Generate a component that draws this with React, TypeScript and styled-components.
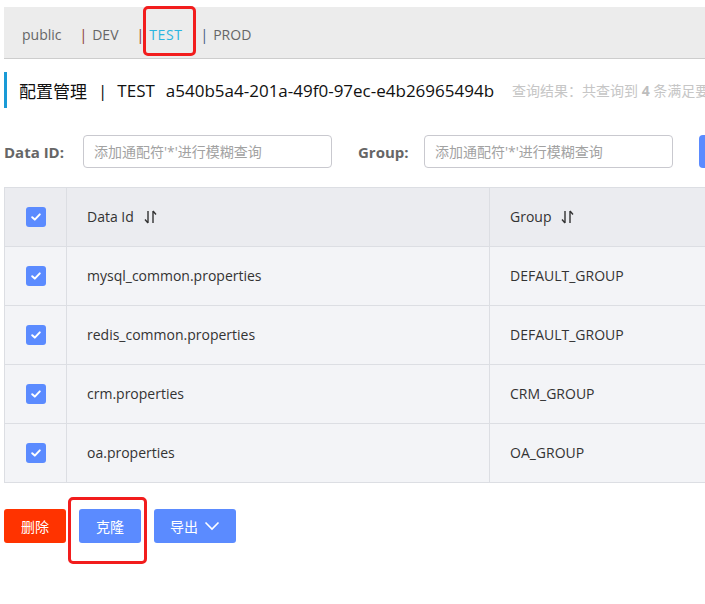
import React from "react";
import styled, { createGlobalStyle } from "styled-components";

const Global = createGlobalStyle`
  html, body { margin: 0; padding: 0; background: #fff; overflow: hidden; }
  body { font-family: "Open Sans", "Noto Sans CJK SC", sans-serif; color: #333; }
  * { box-sizing: border-box; }
`;

const Page = styled.div`
  position: relative;
  width: 705px;
  height: 604px;
  overflow: hidden;
  padding: 7px 0 0 4px;
`;

const TopBar = styled.div`
  height: 52px;
  width: 900px;
  background: #ececec;
  border-bottom: 1px solid #cdcdcd;
  display: flex;
  align-items: center;
  padding-left: 18px;
  padding-top: 3px;
  gap: 18px;
  font-size: 14px;
`;

const Tab = styled.span<{ $active?: boolean }>`
  color: ${(p) => (p.$active ? "#2bb5e0" : "#666")};
  white-space: nowrap;
  letter-spacing: ${(p) => (p.$active ? "0.6px" : "0")};
`;

const Sep = styled.span<{ $color: string }>`
  color: ${(p) => p.$color};
  margin-right: 5px;
  letter-spacing: 0;
`;

const TitleRow = styled.div`
  margin-top: 13px;
  height: 36px;
  display: flex;
  align-items: center;
  border-left: 3px solid #1a9ad6;
  padding-left: 12px;
  white-space: nowrap;
`;

const Title = styled.span`
  font-size: 17px;
  color: #111;
  display: inline-flex;
  align-items: center;
`;

const TitlePart = styled.span<{ $ml?: number }>`
  margin-left: ${(p) => p.$ml ?? 0}px;
`;

const Result = styled.span`
  margin-left: 18px;
  font-size: 14px;
  color: #c6c6c6;
  b { color: #bdbdbd; }
`;

const SearchRow = styled.div`
  margin-top: 27px;
  display: flex;
  align-items: center;
  height: 33px;
  white-space: nowrap;
`;

const Label = styled.span<{ $ml?: number; $w: number }>`
  font-weight: 700;
  font-size: 15px;
  color: #666;
  width: ${(p) => p.$w}px;
  flex-shrink: 0;
  margin-left: ${(p) => p.$ml ?? 0}px;
`;

const Input = styled.input`
  width: 249px;
  flex-shrink: 0;
  height: 33px;
  border: 1px solid #c9c9cf;
  border-radius: 4px;
  padding: 0 10px;
  font-size: 14px;
  font-family: inherit;
  outline: none;
  &::placeholder { color: #a2a2a2; }
`;

const SearchButton = styled.button`
  margin-left: 26px;
  height: 33px;
  width: 70px;
  flex-shrink: 0;
  border: none;
  border-radius: 4px;
  background: #5b8bff;
  color: #fff;
  font-size: 14px;
  font-family: inherit;
`;

const Table = styled.div`
  margin-top: 19px;
  width: 900px;
  border-top: 1px solid #dcdee3;
  border-left: 1px solid #dcdee3;
`;

const Row = styled.div<{ $head?: boolean }>`
  display: grid;
  grid-template-columns: 62px 423px 1fr;
  height: 59px;
  background: ${(p) => (p.$head ? "#ebecf0" : "#f3f4f7")};
  border-bottom: 1px solid #dcdee3;
`;

const Cell = styled.div<{ $center?: boolean }>`
  display: flex;
  align-items: center;
  justify-content: ${(p) => (p.$center ? "center" : "flex-start")};
  padding-left: ${(p) => (p.$center ? 0 : 20)}px;
  padding-bottom: 1px;
  border-right: 1px solid #dcdee3;
  font-size: 14px;
  color: #333;
  white-space: nowrap;
`;

const Check = styled.span`
  width: 20px;
  height: 20px;
  border-radius: 3px;
  background: #5b8bff;
  display: inline-flex;
  align-items: center;
  justify-content: center;
`;

const SortIcon = styled.svg`
  margin-left: 10px;
`;

const Actions = styled.div`
  margin-top: 26px;
  display: flex;
  gap: 13px;
`;

const Btn = styled.button<{ $danger?: boolean; $w: number }>`
  width: ${(p) => p.$w}px;
  height: 34px;
  border: none;
  border-radius: 3px;
  background: ${(p) => (p.$danger ? "#ff3300" : "#5b8bff")};
  color: #fff;
  font-size: 14px;
  font-family: inherit;
  display: inline-flex;
  align-items: center;
  justify-content: center;
  gap: 6px;
  padding: 0;
`;

const Highlight = styled.div`
  position: absolute;
  border: 3px solid #f21d1d;
  border-radius: 5px;
  pointer-events: none;
`;

const CheckMark = () => (
  <svg width="12" height="10" viewBox="0 0 12 10">
    <path d="M2.2 5.2 L4.8 7.6 L9.8 2.4" stroke="#fff" strokeWidth="2" fill="none" strokeLinecap="round" strokeLinejoin="round" />
  </svg>
);

const Sort = () => (
  <SortIcon width="13" height="14" viewBox="0 0 13 14">
    <path d="M4 1 V13 M4 13 L1 9.5" stroke="#333" strokeWidth="1.4" fill="none" />
    <path d="M9 13 V1 M9 1 L12 4.5" stroke="#333" strokeWidth="1.4" fill="none" />
  </SortIcon>
);

const rows = [
  ["mysql_common.properties", "DEFAULT_GROUP"],
  ["redis_common.properties", "DEFAULT_GROUP"],
  ["crm.properties", "CRM_GROUP"],
  ["oa.properties", "OA_GROUP"],
];

export default function App() {
  return (
    <>
      <Global />
      <Page>
        <TopBar>
          <Tab>public</Tab>
          <Tab><Sep $color="#8a3b1f">|</Sep>DEV</Tab>
          <Tab $active><Sep $color="#8a3b1f">|</Sep>TEST</Tab>
          <Tab><Sep $color="#3d5a80">|</Sep>PROD</Tab>
        </TopBar>
        <TitleRow>
          <Title>
            <span>配置管理</span>
            <TitlePart $ml={11}>|</TitlePart>
            <TitlePart $ml={10}>TEST</TitlePart>
            <TitlePart $ml={11}>a540b5a4-201a-49f0-97ec-e4b26965494b</TitlePart>
          </Title>
          <Result>查询结果：共查询到 <b>4</b> 条满足要求的配置。</Result>
        </TitleRow>
        <SearchRow>
          <Label $w={79}>Data ID:</Label>
          <Input placeholder="添加通配符'*'进行模糊查询" />
          <Label $ml={26} $w={66}>Group:</Label>
          <Input placeholder="添加通配符'*'进行模糊查询" />
          <SearchButton>查询</SearchButton>
        </SearchRow>
        <Table>
          <Row $head>
            <Cell $center><Check><CheckMark /></Check></Cell>
            <Cell>Data Id<Sort /></Cell>
            <Cell>Group<Sort /></Cell>
          </Row>
          {rows.map(([id, group]) => (
            <Row key={id}>
              <Cell $center><Check><CheckMark /></Check></Cell>
              <Cell>{id}</Cell>
              <Cell>{group}</Cell>
            </Row>
          ))}
        </Table>
        <Actions>
          <Btn $danger $w={62}>删除</Btn>
          <Btn $w={62}>克隆</Btn>
          <Btn $w={82}>
            导出
            <svg width="16" height="10" viewBox="0 0 16 10">
              <path d="M1.5 1.5 L8 8 L14.5 1.5" stroke="#fff" strokeWidth="1.6" fill="none" />
            </svg>
          </Btn>
        </Actions>
        <Highlight style={{ left: 143, top: 6, width: 53, height: 50 }} />
        <Highlight style={{ left: 68, top: 497, width: 79, height: 67 }} />
      </Page>
    </>
  );
}
